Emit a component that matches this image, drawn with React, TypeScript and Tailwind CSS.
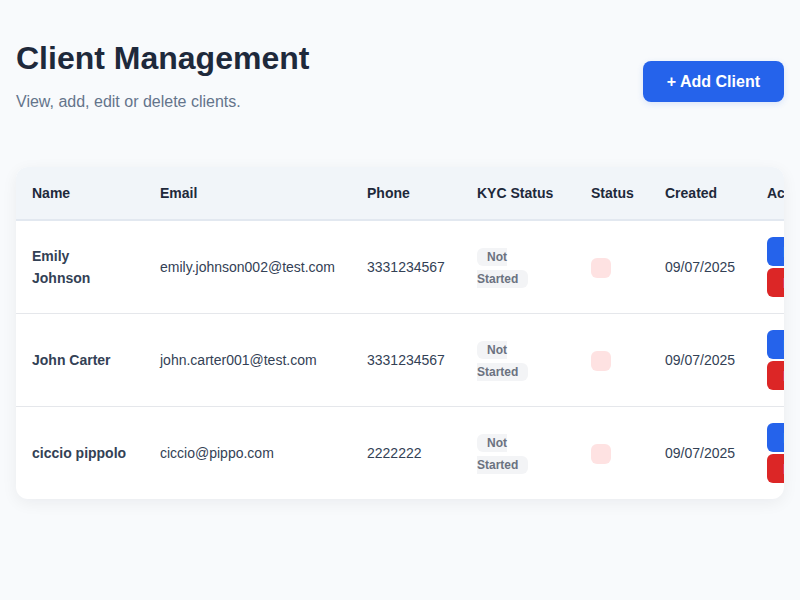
import React from "react";

const clients = [
  {
    name: "Emily Johnson",
    email: "emily.johnson002@test.com",
    phone: "3331234567",
    created: "09/07/2025",
  },
  {
    name: "John Carter",
    email: "john.carter001@test.com",
    phone: "3331234567",
    created: "09/07/2025",
  },
  {
    name: "ciccio pippolo",
    email: "ciccio@pippo.com",
    phone: "2222222",
    created: "09/07/2025",
  },
];

const columns = [
  { label: "Name", width: "w-[128px]" },
  { label: "Email", width: "w-[207px]" },
  { label: "Phone", width: "w-[110px]" },
  { label: "KYC Status", width: "w-[114px]" },
  { label: "Status", width: "w-[74px]" },
  { label: "Created", width: "w-[102px]" },
  { label: "Actions", width: "w-[140px]" },
];

export default function App() {
  return (
    <main
      className="min-h-screen bg-[#f8fafc] px-4 pt-[38px] text-[#334155]"
      style={{ fontFamily: '"Liberation Sans", Arial, sans-serif' }}
    >
      {/* HEADER */}
      <div className="flex items-start justify-between">
        <div>
          <h1 className="text-[32px] leading-[40px] font-bold text-[#1e293b]">
            Client Management
          </h1>
          <p className="mt-3 text-base leading-6 text-[#64748b]">
            View, add, edit or delete clients.
          </p>
        </div>
        <button className="mt-[23px] h-[41px] rounded-lg bg-[#2563eb] px-6 text-base font-bold text-white shadow-[0_2px_6px_rgba(37,99,235,0.15)]">
          + Add Client
        </button>
      </div>

      {/* TABLE */}
      <div className="mt-[53px] overflow-hidden rounded-xl bg-white shadow-[0_4px_16px_rgba(15,23,42,0.06)]">
        <table className="w-[875px] table-fixed border-collapse text-left text-sm">
          <thead className="bg-[#f1f5f9]">
            <tr className="border-b-2 border-[#e2e8f0]">
              {columns.map((col) => (
                <th
                  key={col.label}
                  className={`${col.width} px-4 py-4 leading-5 font-bold text-[#1e293b]`}
                >
                  {col.label}
                </th>
              ))}
            </tr>
          </thead>
          <tbody>
            {clients.map((client, index) => (
              <tr
                key={index}
                className={index < clients.length - 1 ? "border-b border-[#e5e7eb]" : ""}
              >
                <td className="px-4 py-4 align-middle leading-[22px] font-bold text-[#334155]">
                  {client.name}
                </td>
                <td className="px-4 py-4 align-middle leading-[22px]">
                  {client.email}
                </td>
                <td className="px-4 py-4 align-middle leading-[22px]">
                  {client.phone}
                </td>
                <td className="px-4 py-4 align-middle leading-[22px]">
                  <span className="rounded-md bg-[#f3f4f6] px-2.5 py-[2px] text-xs font-bold text-[#6b7280]">
                    Not Started
                  </span>
                </td>
                <td className="px-4 py-4 align-middle leading-[22px]">
                  <span className="inline-block h-5 w-5 rounded-md bg-[#fee2e2] align-middle" />
                </td>
                <td className="px-4 py-4 align-middle leading-[22px]">
                  {client.created}
                </td>
                <td className="px-4 py-4 align-middle">
                  <div className="flex flex-col items-start gap-0.5">
                    <button className="h-[29px] rounded-md bg-[#2563eb] px-4 text-sm text-white">
                      Edit
                    </button>
                    <button className="h-[29px] rounded-md bg-[#dc2626] px-4 text-sm text-white">
                      Delete
                    </button>
                  </div>
                </td>
              </tr>
            ))}
          </tbody>
        </table>
      </div>
    </main>
  );
}
